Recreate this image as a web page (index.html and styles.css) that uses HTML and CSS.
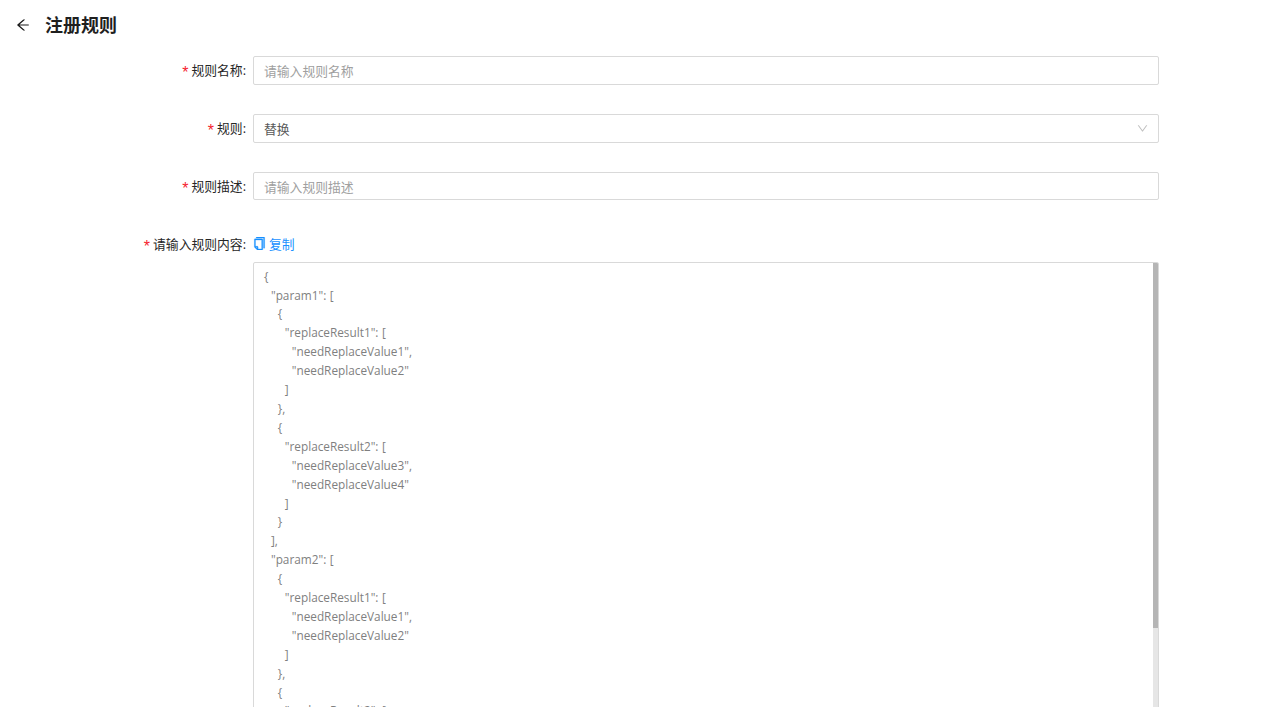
FILE: index.html
```html
<!DOCTYPE html>
<html lang="zh-CN">
<head>
<meta charset="utf-8">
<title>注册规则</title>
<link rel="stylesheet" href="styles.css">
</head>
<body>
<div class="page">
  <header class="page-header">
    <svg class="back-icon" viewBox="64 64 896 896" fill="currentColor"><path d="M872 474H286.9l350.2-304c5.6-4.9 2.2-14-5.2-14h-88.5c-3.9 0-7.6 1.4-10.5 3.9L155 487.8a31.96 31.96 0 0 0 0 48.3L535.1 866c1.5 1.3 3.3 2 5.2 2h91.5c7.4 0 10.8-9.2 5.2-14L286.9 550H872c4.4 0 8-3.6 8-8v-60c0-4.4-3.6-8-8-8z"/></svg>
    <h1 class="page-title">注册规则</h1>
  </header>
  <form class="form">
    <div class="label"><span class="req">*</span>规则名称:</div>
    <div class="control field placeholder">请输入规则名称</div>

    <div class="label"><span class="req">*</span>规则:</div>
    <div class="control field select">
      <span class="select-value">替换</span>
      <svg class="chevron" viewBox="64 64 896 896" fill="currentColor"><path d="M884 256h-75c-5.1 0-9.9 2.5-12.9 6.6L512 654.2 227.9 262.6c-3-4.1-7.8-6.6-12.9-6.6h-75c-6.5 0-10.3 7.4-6.5 12.7l352.6 486.1c12.8 17.6 39 17.6 51.7 0l352.6-486.1c3.9-5.3.1-12.7-6.4-12.7z"/></svg>
    </div>

    <div class="label"><span class="req">*</span>规则描述:</div>
    <div class="control field short placeholder">请输入规则描述</div>

    <div class="label label-content"><span class="req">*</span>请输入规则内容:</div>
    <div class="control content">
      <div class="copy">
        <svg class="copy-icon" viewBox="64 64 896 896" fill="currentColor"><path d="M832 64H296c-4.4 0-8 3.6-8 8v56c0 4.4 3.6 8 8 8h496v688c0 4.4 3.6 8 8 8h56c4.4 0 8-3.6 8-8V96c0-17.7-14.3-32-32-32zM704 192H192c-17.7 0-32 14.3-32 32v530.7c0 8.5 3.4 16.6 9.4 22.6l173.3 173.3c2.2 2.2 4.7 4 7.4 5.5v1.9h4.2c3.5 1.3 7.2 2 11 2H704c17.7 0 32-14.3 32-32V224c0-17.7-14.3-32-32-32zM350 856.2L263.9 770H350v86.2zM664 888H414V746c0-22.1-17.9-40-40-40H232V264h432v624z"/></svg>
        <span>复制</span>
      </div>
      <div class="editor">
<pre class="code">{
  "param1": [
    {
      "replaceResult1": [
        "needReplaceValue1",
        "needReplaceValue2"
      ]
    },
    {
      "replaceResult2": [
        "needReplaceValue3",
        "needReplaceValue4"
      ]
    }
  ],
  "param2": [
    {
      "replaceResult1": [
        "needReplaceValue1",
        "needReplaceValue2"
      ]
    },
    {
      "replaceResult2": [
        "needReplaceValue3",
        "needReplaceValue4"
      ]
    }
  ]
}</pre>
        <div class="scroll-track"><div class="scroll-thumb"></div></div>
      </div>
    </div>
  </form>
</div>
</body>
</html>
```

FILE: styles.css
```css
html, body {
  margin: 0;
  height: 100%;
  overflow: hidden;
  background: #fff;
}

body {
  font-family: "Open Sans", "Noto Sans CJK SC", sans-serif;
  font-size: 12.8px;
  color: #262626;
}

.page {
  height: 707px;
  overflow: hidden;
}

.page-header {
  display: flex;
  align-items: center;
  height: 50px;
  padding-left: 16px;
  gap: 15px;
}

.back-icon {
  width: 14px;
  height: 14px;
  color: #1a1a1a;
}

.page-title {
  margin: 0;
  font-size: 18px;
  font-weight: 700;
  line-height: 24px;
  color: #1f1f1f;
}

.form {
  display: grid;
  grid-template-columns: 246px 906px;
  column-gap: 7px;
  row-gap: 29px;
  padding-top: 6px;
  align-items: start;
}

.label {
  line-height: 29px;
  height: 29px;
  text-align: right;
  white-space: nowrap;
}

.label-content {
  height: auto;
  line-height: 15px;
  padding-top: 7px;
}

.req {
  color: #f5222d;
  margin-right: 3px;
  font-family: "Liberation Sans", sans-serif;
  font-size: 16px;
  line-height: 1;
  vertical-align: -3px;
}

.field {
  box-sizing: border-box;
  height: 29px;
  line-height: 29px;
  border: 1px solid #d9d9d9;
  border-radius: 2px;
  padding: 0 10px;
}

.short {
  height: 28px;
  line-height: 28px;
}

.placeholder {
  color: #a0a0a0;
}

.select {
  display: flex;
  justify-content: space-between;
  align-items: center;
  color: #595959;
}

.select-value {
  padding-top: 1px;
}

.chevron {
  width: 11px;
  height: 11px;
  color: #bfbfbf;
}

.copy {
  display: flex;
  align-items: center;
  gap: 3px;
  height: 17px;
  padding-top: 5px;
  color: #1890ff;
}

.copy-icon {
  width: 13px;
  height: 13px;
  stroke: currentColor;
  stroke-width: 24;
}

.editor {
  position: relative;
  box-sizing: border-box;
  height: 460px;
  margin-top: 10px;
  border: 1px solid #d9d9d9;
  border-radius: 2px;
  overflow: hidden;
}

.code {
  margin: 0;
  padding: 3.64px 10px;
  font-family: "Open Sans", sans-serif;
  font-size: 11.8px;
  word-spacing: 0.4px;
  line-height: 18.91px;
  color: #7f7f7f;
}

.scroll-track {
  position: absolute;
  top: 0;
  right: 0;
  bottom: 0;
  width: 5px;
  background: #e6e6e6;
}

.scroll-thumb {
  height: 365px;
  background: #b5b5b5;
}
```
